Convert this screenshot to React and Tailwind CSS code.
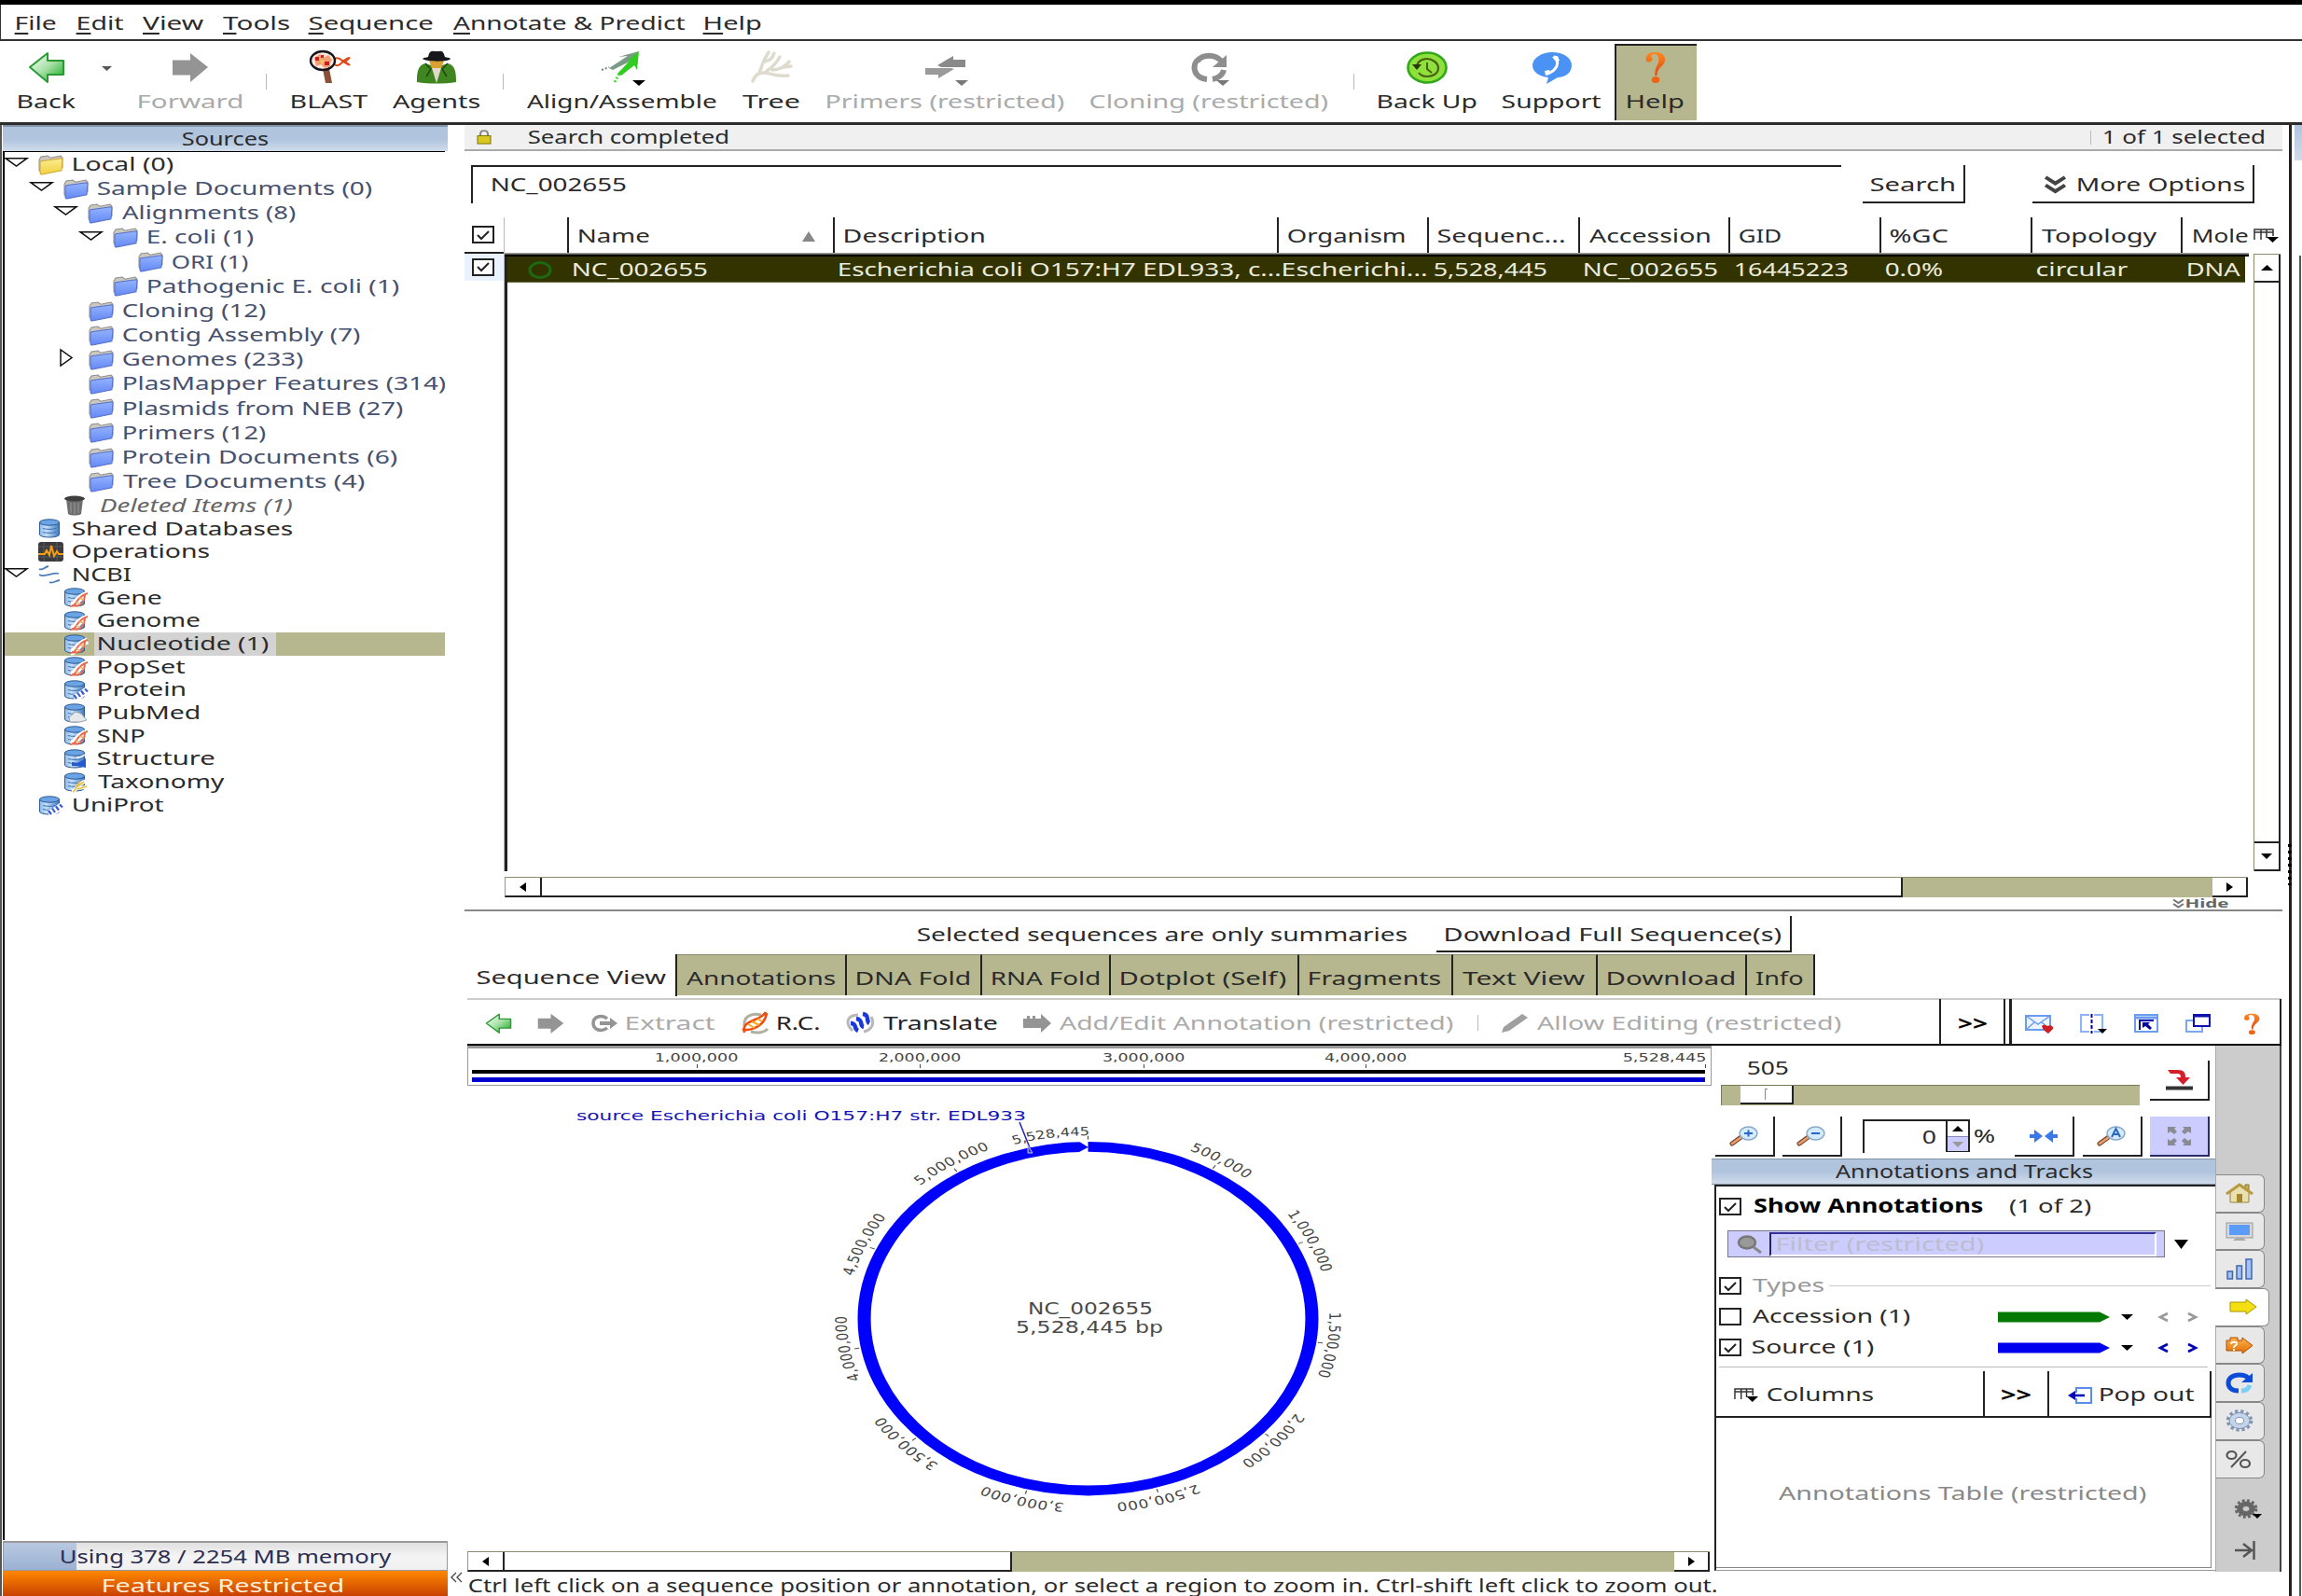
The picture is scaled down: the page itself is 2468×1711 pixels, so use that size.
import React, { useLayoutEffect, useRef } from "react";

/* Text fitted to the width of its box: the glyphs are stretched horizontally. */
function Txt({ c = "", children, u }) {
  const outer = useRef(null);
  const inner = useRef(null);
  useLayoutEffect(() => {
    const fit = () => {
      const cs = getComputedStyle(inner.current);
      const ctx = document.createElement("canvas").getContext("2d");
      ctx.font = `${cs.fontStyle} ${cs.fontWeight} ${cs.fontSize} ${cs.fontFamily}`;
      const m = ctx.measureText(children);
      const k = outer.current.clientWidth / (m.actualBoundingBoxRight + m.actualBoundingBoxLeft);
      inner.current.style.transform = `translate(${m.actualBoundingBoxLeft * k}px, -1px) scaleX(${k})`;
    };
    fit();
    document.fonts.ready.then(fit);
  }, [children]);
  return (
    <span ref={outer} className={"block shrink-0 whitespace-pre leading-none " + c}>
      <span ref={inner} className="inline-block origin-left align-top">
        {u ? <><span className="underline decoration-[1.500px] underline-offset-[3px]">{children[0]}</span>{children.slice(1)}</> : children}
      </span>
    </span>
  );
}

function Ic({ c = "", vb = "0 0 24 24", children }) {
  return (
    <svg className={"block shrink-0 overflow-visible " + c} viewBox={vb} preserveAspectRatio="none" fill="none">
      {children}
    </svg>
  );
}

const Defs = () => (
  <svg className="absolute h-0 w-0">
    <defs>
      <linearGradient id="gGreen" x1="0" y1="0" x2="1" y2="1"><stop offset="0" stopColor="#fff" /><stop offset="0.5" stopColor="#a8e0a8" /><stop offset="1" stopColor="#10a818" /></linearGradient>
      <linearGradient id="gBlue" x1="0" y1="0" x2="1" y2="0"><stop offset="0" stopColor="#8cb8ec" /><stop offset="0.35" stopColor="#c8e0fa" /><stop offset="1" stopColor="#3a78c0" /></linearGradient>
      <linearGradient id="gFold" x1="0" y1="0" x2="0" y2="1"><stop offset="0" stopColor="#94b4ff" /><stop offset="1" stopColor="#6488f4" /></linearGradient>
      <linearGradient id="gYel" x1="0" y1="0" x2="0" y2="1"><stop offset="0" stopColor="#fcec90" /><stop offset="1" stopColor="#f2d040" /></linearGradient>
      <linearGradient id="gOr" x1="0" y1="0" x2="0" y2="1"><stop offset="0" stopColor="#ffb050" /><stop offset="1" stopColor="#e07000" /></linearGradient>
      <linearGradient id="gQ" x1="0" y1="0" x2="0" y2="1"><stop offset="0" stopColor="#ff8820" /><stop offset="1" stopColor="#e04810" /></linearGradient>
    </defs>
  </svg>
);

const LeftArrow = ({ c }) => <Ic c={c} vb="0 0 40 34"><path d="M2 17 21 2v8h17v15H21v8z" fill="url(#gGreen)" stroke="#2a9a34" strokeWidth="2" strokeLinejoin="round" /></Ic>;
const RightArrow = ({ c }) => <Ic c={c} vb="0 0 40 34"><path d="M39 17 20 1v8H1v17h19v8z" fill="#949494" /></Ic>;
const Caret = ({ c = "" }) => <Ic c={c} vb="0 0 12 6"><path d="M0 0h12L6 6z" fill="currentColor" /></Ic>;

const Blast = () => (
  <Ic c="h-[36px] w-[46px]" vb="0 0 46 36">
    <path d="M28 9c5-4 12 8 16 6M28 15c5 5 9-7 16-7M44 8l-5 4 5 4" stroke="#e04818" strokeWidth="2" />
    <path d="M15 20h7l3 15h-7z" fill="#8a5038" />
    <ellipse cx="15" cy="11" rx="13" ry="10" fill="#fbe6dc" stroke="#15151f" strokeWidth="2.4" />
    <path d="M6 8l6-4 4 4 5-3 4 5-3 5 2 2-7 2-4-4-5 2z" fill="#f0a070" />
    <path d="M7 7h4v4H7zM17 12h5v4h-5zM13 5h3v3h-3z" fill="#c82020" />
    <path d="M12 9l5 2-3 5z" fill="#f8c060" />
  </Ic>
);
const Agent = () => (
  <Ic c="h-[36px] w-[46px]" vb="0 0 46 36">
    <path d="M2 34c0-8 0-18 9-20l12 4 12-4c9 2 9 12 9 20-12 2-30 2-42 0z" fill="#3f8620" />
    <path d="M11 14l6 6-5 8M35 14l-6 6 5 8" stroke="#1c4a0c" strokeWidth="1.5" />
    <path d="M15 11h16l-3 8h-10z" fill="#d8a030" />
    <path d="M18 19l5 16 5-16z" fill="#e4d8c8" />
    <path d="M8 9c2-2 5-1 6-2 1-5 3-7 6-6h6c4-1 5 3 6 6 2 1 4 0 6 2 0 3-24 4-30 0z" fill="#16181c" />
  </Ic>
);
const Align = () => (
  <Ic c="h-[36px] w-[48px]" vb="0 0 48 36">
    <path d="M2 21l8-3" stroke="#6a8a78" strokeWidth="2" strokeDasharray="2 2" />
    <path d="M10 19 30 6l-10 1L42 1 34 17l0-6L14 21z" fill="#7a9a88" />
    <path d="M16 34l6-11" stroke="#50d840" strokeWidth="3" strokeDasharray="2 2" />
    <path d="M19 25 34 9l-6 3L42 1l-2 20-3-5-14 11z" fill="#30cc20" />
  </Ic>
);
const Tree = () => (
  <Ic c="h-[36px] w-[46px]" vb="0 0 46 36">
    <path d="M3 33c3-7 5-8 11-9s12 5 27 3M10 25c2-7 4-14 10-23M16 12c6-1 8-4 10-9M18 22c5-3 10-8 14-15M24 21c6 0 14-3 18-9M36 18l8-1" stroke="#dedbcc" strokeWidth="3.500" strokeLinecap="round" />
  </Ic>
);
const Primers = () => (
  <Ic c="h-[26px] w-[46px]" vb="0 0 46 26"><path d="M14 11 31 1v4h13v8H18z" fill="#8a8a8a" /><path d="M32 15 15 25v-4H1v-7h28z" fill="#9a9a9a" /></Ic>
);
const Cloning = () => (
  <Ic c="h-[29px] w-[40px]" vb="0 0 40 29">
    <path d="M17 27C7 26 2 19 4 11M7 7c6-7 18-7 25 0M35 17c-1 5-6 9-12 10" stroke="#8e8e8e" strokeWidth="6" /><path d="M38 1v13H23z" fill="#8e8e8e" /><path d="M4 12c0-3 1-4 4-6" stroke="#8e8e8e" strokeWidth="6" />
  </Ic>
);
const Backup = () => (
  <Ic c="h-[35px] w-[44px]" vb="0 0 44 35">
    <ellipse cx="22" cy="17.500" rx="20.500" ry="16" fill="#8ee03c" stroke="#30a818" strokeWidth="2.600" />
    <path d="M11 17c0-6 6-9 11-9s12 4 12 10-6 9-12 9c-4 0-7-1-9-4" stroke="#4a6010" strokeWidth="2.200" /><path d="M6 14h10l-5 6z" fill="#2a3808" /><path d="M22 12v7l5 4" stroke="#4a6010" strokeWidth="2" />
  </Ic>
);
const Support = () => (
  <Ic c="h-[35px] w-[44px]" vb="0 0 44 35">
    <path d="M22 1c12 0 21 6 21 14s-7 13-15 13l-12 7 2-7C8 27 1 22 1 15S10 1 22 1z" fill="#4a92f4" />
    <path d="M25 6c5 6 3 14-8 18" stroke="#fff" strokeWidth="3" strokeLinecap="round" /><path d="M22 6l6-1 2 5-4 1zM14 21l5-1 1 4-5 2z" fill="#fff" />
  </Ic>
);
const Question = ({ c }) => (
  <Ic c={c} vb="0 0 26 34"><path d="M3 10C1 3 8 1 13 1c7 0 11 3 11 8 0 7-9 8-9 17h-2c-1-10 4-11 4-17 0-4-2-6-5-6-4 0-4 3-2 5 1 3-6 5-7 2z" fill="url(#gQ)" /><ellipse cx="13.500" cy="30.500" rx="4.500" ry="3.500" fill="#ee6414" /></Ic>
);

const Folder = ({ y }) => (
  <Ic c="h-[21px] w-[27px]" vb="0 0 27 20">
    <path d="M1 5 3 2l7-1 3 2 11-2 2 2v10L4 18 1 16z" fill="#ccc8c0" stroke="#8e8e8c" strokeWidth="1" />
    <path d="M3 6.500 25 3.500c1 0 1 1 1 1l-1 11.500L4 20c-1 0-2-1-2-2L2 7.500z" fill={y ? "url(#gYel)" : "url(#gFold)"} stroke={y ? "#d0a830" : "#5470c8"} strokeWidth="1" />
  </Ic>
);
const Cyl = () => (
  <>
    <path d="M1.500 4v13c0 4 21 4 21 0V4z" fill="url(#gBlue)" stroke="#2e5c94" />
    <ellipse cx="12" cy="4" rx="10.500" ry="3.200" fill="#6aa4e4" stroke="#2e5c94" />
    <path d="M5 10.500c4 1.200 10 1.200 14 0M5 14.500c4 1.200 10 1.200 14 0" stroke="#3a70b0" />
  </>
);
function DbIcon({ k }) {
  return (
    <Ic c="h-[21px] w-[27px]" vb="0 0 27 21">
      <Cyl />
      {k === "dna" && <><path d="M8 19c7 0 4-8 18-12" stroke="#fff" strokeWidth="7" /><path d="M7 20c9 0 5-10 19-14M9 19c8 2 13-1 14-11" stroke="#e8684c" strokeWidth="2" /><path d="M13 15l5 3M17 11l5 2" stroke="#f4b060" strokeWidth="1.400" /></>}
      {k === "prot" && <><path d="M11 19c6-1 9-4 15-9" stroke="#fff" strokeWidth="7" /><path d="M11 16l3 4M15 13.500l3 4.500M19 11.500l3 4M23 9.500l3 3" stroke="#3a5ad8" strokeWidth="2.200" /></>}
      {k === "pub" && <path d="M6 15l7-6 6 2 6 7-7 2-11 0z" fill="#e6e9ec" stroke="#9aa4ac" />}
      {k === "struct" && <><path d="M9 14l6 1 9-5v10l-9-2-6 0z" fill="#2858d0" /><path d="M14 9c3 1 6-1 9-3" stroke="#e8f0ff" strokeWidth="2" /></>}
      {k === "tax" && <><path d="M9 21c4 0 4-8 16-12M13 17c4 0 8 0 13-2" stroke="#fff" strokeWidth="4" /><path d="M10 21c4-2 3-7 8-11M14 16l8-6M15 18l10-3" stroke="#e8c040" strokeWidth="1.800" /></>}
    </Ic>
  );
}
const Trash = () => <Ic c="h-[22px] w-[22px]" vb="0 0 22 22"><path d="M2 4h18l-2 16c-3 2-11 2-14 0z" fill="#6e6e6e" /><path d="M7 8v11M11 8v12M15 8v11" stroke="#9a9a9a" /><ellipse cx="11" cy="3.500" rx="11" ry="3" fill="#3e3e3e" /></Ic>;
const Ops = () => <Ic c="h-[21px] w-[27px]" vb="0 0 27 21"><rect width="27" height="21" rx="3" fill="#3c3c3e" /><path d="M0 5h27M0 16h27M6 0v21M20 0v21" stroke="#5a5a5c" /><path d="M0 13h7l2-4 3 5 2-10 3 11 3-5 2 3h5" stroke="#f8a010" strokeWidth="2" /></Ic>;
const Ncbi = () => <Ic c="h-[20px] w-[24px]" vb="0 0 24 20"><path d="M1 4c4 2 5-2 10-3M1 10c6 4 14-3 21-1M12 18c3 2 6-1 11-2" stroke="#5080b8" strokeWidth="1.800" /></Ic>;

const rowsA = [
  ["pl-[5px]", "w-[108px]", "Local (0)", "open", "yellow"],
  ["pl-[32px]", "w-[294px]", "Sample Documents (0)", "open"],
  ["pl-[58px]", "w-[186px]", "Alignments (8)", "open"],
  ["pl-[85px]", "w-[114px]", "E. coli (1)", "open"],
  ["pl-[112px]", "w-[81px]", "ORI (1)"],
  ["pl-[85px]", "w-[270px]", "Pathogenic E. coli (1)"],
  ["pl-[59px]", "w-[153px]", "Cloning (12)"],
  ["pl-[59px]", "w-[254px]", "Contig Assembly (7)"],
  ["pl-[59px]", "w-[193px]", "Genomes (233)", "shut"],
  ["pl-[59px]", "w-[346px]", "PlasMapper Features (314)"],
  ["pl-[59px]", "w-[300px]", "Plasmids from NEB (27)"],
  ["pl-[59px]", "w-[153px]", "Primers (12)"],
  ["pl-[59px]", "w-[294px]", "Protein Documents (6)"],
  ["pl-[59px]", "w-[259px]", "Tree Documents (4)"],
];
const rowsB = [
  ["pl-[5px]", "w-[235px]", "Shared Databases", "db"],
  ["pl-[5px]", "w-[146px]", "Operations", "ops"],
  ["pl-[5px]", "w-[63px]", "NCBI", "ncbi", "open"],
  ["pl-[32px]", "w-[68px]", "Gene", "dna"],
  ["pl-[32px]", "w-[109px]", "Genome", "dna"],
  ["pl-[32px]", "w-[183px]", "Nucleotide (1)", "dna"],
  ["pl-[32px]", "w-[93px]", "PopSet", "dna"],
  ["pl-[32px]", "w-[94px]", "Protein", "prot"],
  ["pl-[32px]", "w-[108px]", "PubMed", "pub"],
  ["pl-[32px]", "w-[50px]", "SNP", "dna"],
  ["pl-[32px]", "w-[125px]", "Structure", "struct"],
  ["pl-[32px]", "w-[136px]", "Taxonomy", "tax"],
  ["pl-[5px]", "w-[97px]", "UniProt", "prot"],
];
const Twisty = ({ s }) => (
  <span className="flex h-full w-[36px] shrink-0 items-center">
    {s === "open" && <Ic c="-mt-[4px] h-[10px] w-[25px]" vb="0 0 25 10"><path d="M1 .7h23L12.500 9z" stroke="#111" strokeWidth="1.500" /></Ic>}
    {s === "shut" && <Ic c="-mt-[4px] ml-[5px] h-[19px] w-[14px]" vb="0 0 14 19"><path d="M1 1v17l12-8.500z" stroke="#111" strokeWidth="1.500" /></Ic>}
  </span>
);

function Sidebar() {
  return (
    <div className="flex h-full w-[498px] shrink-0">
      <div className="flex w-[480px] flex-col border-l-2 border-[#555] pl-px">
        <div className="flex h-[28px] items-center justify-center border-t-2 border-[#8494a8] bg-linear-to-b from-[#b0c4de] via-[#b0c4de] to-[#d0dcea]">
          <Txt c="w-[91px]">Sources</Txt>
        </div>
        <div className="flex h-[1489px] w-[474px] flex-col overflow-hidden border-t border-l-2 border-black">
          {rowsA.map(([p, w, t, s, y]) => (
            <div key={t} className={"flex h-[26.180px] shrink-0 items-center -ml-[5px] " + p}>
              <Twisty s={s} />
              <Folder y={y} />
              <Txt c={"ml-[10px] " + w + (y ? "" : " text-[#46506e]")}>{t}</Txt>
            </div>
          ))}
          <div className="flex h-[25px] shrink-0 items-center pl-[64px]">
            <Trash />
            <Txt c="ml-[16px] w-[207px] italic text-[#666]">Deleted Items (1)</Txt>
          </div>
          {rowsB.map(([p, w, t, k, s]) => (
            <div key={t} className={"flex h-[24.700px] shrink-0 items-center " + (t === "Nucleotide (1)" ? "bg-[#b7b78f]" : "")}>
              <div className={"-ml-[5px] flex h-full items-center " + p}>
                <Twisty s={s} />
                <span className="flex w-[27px]">{k === "ops" ? <Ops /> : k === "ncbi" ? <Ncbi /> : <DbIcon k={k} />}</span>
                <span className={"ml-[6px] flex h-full items-center pl-[4px] pr-[8px] " + (t === "Nucleotide (1)" ? "bg-[#d3d3d3]" : "")}><Txt c={w}>{t}</Txt></span>
              </div>
            </div>
          ))}
        </div>
        <div className="mt-px flex h-[32px] border border-t-2 border-[#999]">
          <div className="relative flex grow items-center bg-linear-to-b from-[#e0e0e0] via-[#f4f4f4] to-[#f0f0f0]">
            <div className="h-full w-[78px] bg-linear-to-b from-[#b8c8e0] to-[#9cb2d4]" />
            <div className="absolute left-[61px] top-[5px]"><Txt c="w-[355px] text-[#2c2c50]">Using 378 / 2254 MB memory</Txt></div>
          </div>
        </div>
        <div className="flex h-[27px] grow items-center bg-linear-to-b from-[#ff8800] to-[#c84000] pl-[107px] pt-[6px]">
          <Txt c="w-[257px] text-[#fff0dc]">Features Restricted</Txt>
        </div>
      </div>
      <div className="flex w-[18px] items-end pb-[15px] pl-[3px]"><Ic c="h-[10px] w-[13px]" vb="0 0 13 9"><path d="M6 0 1 4.500 6 9M12 0 7 4.500 12 9" stroke="#444" strokeWidth="1.300" /></Ic></div>
    </div>
  );
}

const Tool = ({ m, w, label, children, gray, drop }) => (
  <div className={"flex flex-col items-center pt-[8px] " + m + (gray ? " text-[#aaa]" : "")}>
    <div className="relative flex h-[40px] items-center justify-center">
      {children}
      {drop && <Caret c={"absolute -right-[1px] bottom-0 h-[6px] w-[14px] " + drop} />}
    </div>
    <div className="flex h-[35px] items-center"><Txt c={w}>{label}</Txt></div>
  </div>
);
const Sep = ({ m }) => <div className={"h-[17px] w-px shrink-0 bg-[#bbb] " + m} />;

function Toolbar() {
  return (
    <div className="flex h-[90px] border-b-3 border-[#2c2c2c] pl-[19px]">
      <Tool m="" w="w-[62px]" label="Back"><LeftArrow c="h-[34px] w-[40px]" /></Tool>
      <Caret c="ml-[28px] mt-[27px] h-[5px] w-[11px] text-[#555]" />
      <Tool m="ml-[28px]" w="w-[111px]" label="Forward" gray><RightArrow c="h-[32px] w-[40px]" /></Tool>
      <Sep m="ml-[26px] mt-[35px]" />
      <Tool m="ml-[26px]" w="w-[83px]" label="BLAST"><Blast /></Tool>
      <Tool m="ml-[26px]" w="w-[93px]" label="Agents"><Agent /></Tool>
      <Sep m="ml-[25px] mt-[35px]" />
      <Tool m="ml-[25px]" w="w-[203px]" label="Align/Assemble" drop="text-black"><Align /></Tool>
      <Tool m="ml-[28px]" w="w-[61px]" label="Tree"><Tree /></Tool>
      <Tool m="ml-[29px]" w="w-[255px]" label="Primers (restricted)" gray drop="text-[#777]"><Primers /></Tool>
      <Tool m="ml-[28px]" w="w-[255px]" label="Cloning (restricted)" gray drop="text-[#777]"><Cloning /></Tool>
      <Sep m="ml-[27px] mt-[35px]" />
      <Tool m="ml-[25px]" w="w-[106px]" label="Back Up"><Backup /></Tool>
      <Tool m="ml-[28px]" w="w-[105px]" label="Support"><Support /></Tool>
      <div className="ml-[15px] mt-[3px] flex h-[82px] w-[88px] justify-center border-l-2 border-t-2 border-[#222] bg-[#b7b78f] pr-[4px]">
        <div className="-mt-[5px]"><Tool m="" w="w-[61px]" label="Help"><Question c="h-[34px] w-[25px]" /></Tool></div>
      </div>
    </div>
  );
}

const Check = ({ on = true, c = "" }) => (
  <span className={"flex h-[19px] w-[24px] shrink-0 items-center justify-center border-2 border-[#222] bg-white " + c}>
    {on && <Ic c="h-[10px] w-[14px]" vb="0 0 14 10"><path d="M1 5l4 4 8-8" stroke="#222" strokeWidth="2" /></Ic>}
  </span>
);

const cols = [
  ["w-[285px]", "w-[76px]", "Name", "w-[144px]", "NC_002655", "pl-[4px]"],
  ["w-[476px]", "w-[151px]", "Description", "w-[474px]", "Escherichia coli O157:H7 EDL933, c...", "pl-[4px]"],
  ["w-[161px]", "w-[125px]", "Organism", "w-[155px]", "Escherichi...", "pl-[4px]"],
  ["w-[162px]", "w-[136px]", "Sequenc...", "w-[120px]", "5,528,445", "pl-[6px]"],
  ["w-[161px]", "w-[130px]", "Accession", "w-[143px]", "NC_002655", "pl-[4px]"],
  ["w-[162px]", "w-[44px]", "GID", "w-[121px]", "16445223", "pl-[5px]"],
  ["w-[162px]", "w-[62px]", "%GC", "w-[61px]", "0.0%", "pl-[5px]"],
  ["w-[161px]", "w-[124px]", "Topology", "w-[98px]", "circular", "pl-[5px]"],
];

function HBar({ c, thumb, rest }) {
  return (
    <div className={"flex h-[22px] border-t border-[#8c8c6c] bg-[#b7b78f] " + c}>
      <div className="flex w-[40px] items-center justify-center border-b-2 border-l border-r-2 border-[#222] border-l-[#999970] bg-white"><Ic c="h-[10px] w-[7px]" vb="0 0 7 10"><path d="M7 0v10L0 5z" fill="#000" /></Ic></div>
      <div className={"border-b-2 border-r-2 border-[#222] bg-white " + thumb} />
      <div className={rest} />
      <div className="flex grow items-center justify-center border-b-2 border-r-2 border-[#222] bg-white"><Ic c="h-[10px] w-[7px]" vb="0 0 7 10"><path d="M0 0v10l7-5z" fill="#000" /></Ic></div>
    </div>
  );
}
const Chev2 = ({ c, k = "#444" }) => <Ic c={c} vb="0 0 24 20"><path d="M2 1l10 7 10-7M2 10l10 7 10-7" stroke={k} strokeWidth="4" /></Ic>;
const ColIcon = ({ c }) => <Ic c={c} vb="0 0 28 15"><path d="M1 12V1h20v7M1 4h20M8 1v11M14 1v9" stroke="#333" strokeWidth="1.500" /><path d="M14 9h13l-6.500 6z" fill="#000" /></Ic>;

function Documents() {
  return (
    <>
      <div className="flex h-[28px] shrink-0 items-center border-b-2 border-[#aaa] bg-[#f0f0f0] pl-[13px]">
        <Ic c="h-[16px] w-[16px]" vb="0 0 16 17"><path d="M4 8V5c0-5 8-5 8 0v3" stroke="#888" strokeWidth="2" /><rect x="1" y="7" width="14" height="9" fill="#d8c820" stroke="#7c7000" /></Ic>
        <Txt c="ml-[40px] w-[213px]">Search completed</Txt>
        <div className="ml-[1461px] h-[15px] w-px bg-[#bbb]" />
        <Txt c="ml-[13px] w-[172px]">1 of 1 selected</Txt>
      </div>
      <div className="flex h-[71px] shrink-0 pl-[7px] pt-[15px]">
        <div className="flex h-[41px] w-[1469px] items-center border-l-2 border-t-2 border-[#222] pl-[20px]"><Txt c="w-[144px]">NC_002655</Txt></div>
        <div className="ml-[23px] flex h-[41px] w-[110px] items-center border-b-2 border-r-2 border-[#222] pl-[9px] pt-[4px]"><Txt c="w-[90px]">Search</Txt></div>
        <div className="ml-[72px] flex h-[41px] w-[238px] items-center border-b-2 border-r-2 border-[#222] pl-[12px] pt-[4px]"><Chev2 c="h-[19px] w-[25px]" /><Txt c="ml-[11px] w-[179px]">More Options</Txt></div>
      </div>
      <div className="flex h-[701px] shrink-0">
        <div className="w-[42px] shrink-0">
          <div className="flex h-[39px] items-center border-b-2 border-[#222] pl-[8px]"><Check /></div>
          <div className="flex h-[29px] items-center bg-[#eaf1ff] pl-[8px] pb-px"><Check /></div>
        </div>
        <div className="flex w-[1871px] shrink-0 flex-col border-l border-[#bbb]">
          <div className="flex h-[38px] shrink-0">
            <div className="w-[69px] shrink-0 border-r-2 border-[#222]" />
            {cols.map(([w, tw, t]) => (
              <div key={t} className={"flex shrink-0 items-center border-r-2 border-[#222] pl-[10px] pt-[2px] " + w}>
                <Txt c={tw}>{t}</Txt>
                {t === "Name" && <Ic c="ml-[164px] h-[11px] w-[14px]" vb="0 0 14 11"><path d="M7 0l7 11H0z" fill="#888" /></Ic>}
              </div>
            ))}
            <div className="flex w-[71px] items-center pl-[11px] pt-[2px]"><Txt c="w-[59px]">Mole</Txt></div>
          </div>
          <div className="h-[4px] shrink-0 border-b-2 border-t border-b-black border-t-[#999] bg-[#66665a]" />
          <div className="flex grow flex-col border-l-3 border-[#222]">
            <div className="flex h-[28px] w-[1863px] items-center overflow-hidden border-b border-[#6a6a40] bg-[#333300] pt-px text-[#ececdc]">
              <div className="flex w-[66px] shrink-0 pl-[22px]"><Ic c="h-[19px] w-[26px]" vb="0 0 26 19"><ellipse cx="13" cy="9.500" rx="11" ry="8" stroke="#1c6a10" strokeWidth="3" /></Ic></div>
              {cols.map(([w, , , tw, t, p], i) => (
                <div key={i} className={"flex shrink-0 items-center " + p + " " + w}><Txt c={tw}>{t}</Txt></div>
              ))}
              <div className="pl-[5px]"><Txt c="w-[58px]">DNA</Txt></div>
            </div>
          </div>
        </div>
        <div className="ml-[5px] flex w-[31px] flex-col">
          <div className="flex h-[39px] items-center"><ColIcon c="h-[15px] w-[28px]" /></div>
          <div className="flex w-[29px] grow flex-col border-l border-t border-[#8c8c6c]">
            <div className="flex h-[30px] items-center justify-center border-b-2 border-r-2 border-[#222]"><Ic c="h-[6px] w-[13px]" vb="0 0 12 6"><path d="M0 6h12L6 0z" fill="#000" /></Ic></div>
            <div className="grow border-b-2 border-r-2 border-[#222]" />
            <div className="flex h-[30px] items-center justify-center border-b-2 border-r-2 border-[#222]"><Caret c="h-[6px] w-[12px] text-black" /></div>
          </div>
        </div>
      </div>
      <div className="flex h-[28px] shrink-0 flex-col pl-[43px] pt-[6px]"><HBar c="w-[1869px]" thumb="w-[1459px]" rest="w-[332px]" /></div>
      <div className="flex h-[15px] shrink-0 items-center border-b-2 border-[#888] pl-[1831px]">
        <Chev2 c="h-[10px] w-[13px]" k="#777" /><Txt c="ml-[2px] mt-[2px] w-[46px] text-[13px] font-bold text-[#666]">Hide</Txt>
      </div>
    </>
  );
}

const tabs = [
  ["w-[182px]", "w-[159px]", "Annotations"], ["w-[145px]", "w-[121px]", "DNA Fold"], ["w-[138px]", "w-[115px]", "RNA Fold"],
  ["w-[202px]", "w-[178px]", "Dotplot (Self)"], ["w-[165px]", "w-[141px]", "Fragments"], ["w-[155px]", "w-[131px]", "Text View"],
  ["w-[160px]", "w-[136px]", "Download"], ["w-[73px]", "w-[51px]", "Info"],
];

function SeqTools() {
  return (
    <div className="flex h-[51px] w-[1945px] shrink-0 items-center border-b-2 border-t-2 border-b-black border-t-[#ccc] pl-[19px] pt-[2px] text-[#aaa]">
      <LeftArrow c="h-[22px] w-[29px]" />
      <RightArrow c="ml-[27px] h-[22px] w-[29px]" />
      <Ic c="ml-[28px] h-[20px] w-[30px]" vb="0 0 30 20"><path d="M18 5C12 0 3 3 3 10s9 10 15 5" stroke="#949494" strokeWidth="3.500" /><path d="M10 8h11V4l8 6-8 6v-4H10z" fill="#949494" /></Ic>
      <Txt c="ml-[8px] mt-[2px] w-[95px]">Extract</Txt>
      <Ic c="ml-[28px] h-[23px] w-[31px]" vb="0 0 31 23"><path d="M22 3C10 0 3 6 4 15M11 21c8 2 14 1 18-3" stroke="#b0b0a0" strokeWidth="3" /><path d="M2 19C14 20 26 14 28 1M4 22C0 8 22 10 27 0" stroke="#f04c10" strokeWidth="2.600" /><path d="M8 13l7 4M12 10l8 4M18 7l5 3" stroke="#f8a820" strokeWidth="2" /></Ic>
      <Txt c="ml-[8px] mt-[2px] w-[46px] text-[#222]">R.C.</Txt>
      <Ic c="ml-[28px] h-[23px] w-[31px]" vb="0 0 31 23"><path d="M13 3C5 3 2 7 2 11s3 7 5 9M19 21c9-2 12-9 8-16" stroke="#b8b8b8" strokeWidth="3" /><path d="M5 12c7 0 3 6 8 8M11 7c8 1 3 8 8 9M18 2c8 1 3 8 7 10" stroke="#1a38e0" strokeWidth="4.500" /></Ic>
      <Txt c="ml-[9px] mt-[2px] w-[122px] text-[#222]">Translate</Txt>
      <Ic c="ml-[28px] h-[20px] w-[30px]" vb="0 0 30 20"><path d="M0 5h4V2h3v3h3V2h3v3h6V0l11 10-11 10v-5H0z" fill="#949494" /></Ic>
      <Txt c="ml-[9px] mt-[2px] w-[422px]">Add/Edit Annotation (restricted)</Txt>
      <Sep m="ml-[26px]" />
      <Ic c="ml-[25px] h-[22px] w-[29px]" vb="0 0 29 22"><path d="M0 21l2-6L22 1l6 4L8 19z" fill="#a0a0a0" /></Ic>
      <Txt c="ml-[9px] mt-[2px] w-[326px]">Allow Editing (restricted)</Txt>
      <div className="-mt-[2px] ml-[105px] flex h-[49px] w-[71px] items-center border-l-2 border-r-2 border-[#222] pl-[18px] pt-[5px]"><Txt c="w-[31px] font-bold text-black">{">>"}</Txt></div>
      <div className="-mt-[2px] ml-[4px] flex h-[49px] grow items-center border-l-3 border-r-2 border-[#222] pl-[14px] pt-[3px]">
        <Ic c="h-[21px] w-[31px]" vb="0 0 31 21"><rect x="1" y="2" width="26" height="15" fill="#eef4ff" stroke="#6a9cf0" strokeWidth="2" /><path d="M1 2l13 9L27 2M1 17l9-8M27 17l-9-8" stroke="#6a9cf0" strokeWidth="1.500" /><path d="M18 13c2-2 4-1 6 0 3-2 7 0 6 3l-5 5c-3-2-6-4-7-8z" fill="#cc2020" /></Ic>
        <Ic c="ml-[28px] h-[21px] w-[29px]" vb="0 0 29 21"><path d="M10 1H1v18h9M15 1h9v18h-9" stroke="#8ab4f8" strokeWidth="2" /><path d="M12.500 0v21" stroke="#0000a8" strokeWidth="2" strokeDasharray="4 2" /><path d="M19 16h10l-5 5z" fill="#000" /></Ic>
        <Ic c="ml-[29px] h-[20px] w-[26px]" vb="0 0 26 20"><rect x="1" y="1" width="24" height="18" stroke="#6a9cf0" strokeWidth="2" /><path d="M1 4h24" stroke="#6a9cf0" strokeWidth="3" /><path d="M6 17V7h15" stroke="#0000b0" strokeWidth="2" /><path d="M9 9h8l-2 2 4 4-2 2-5-4-3 2z" fill="#0000a0" /></Ic>
        <Ic c="ml-[29px] h-[21px] w-[28px]" vb="0 0 28 21"><rect x="1" y="7" width="17" height="12" stroke="#7aa8f4" strokeWidth="2" /><rect x="9" y="1" width="17" height="12" fill="#fff" stroke="#1010b0" strokeWidth="2" /><path d="M8 2h19" stroke="#1010b0" strokeWidth="3" /></Ic>
        <div className="ml-[33px]"><Question c="h-[23px] w-[20px]" /></div>
      </div>
    </div>
  );
}

const marks = ["500,000", "1,000,000", "1,500,000", "2,000,000", "2,500,000", "3,000,000", "3,500,000", "4,000,000", "4,500,000", "5,000,000"];
const R = 198.8;
function Plasmid() {
  const frac = (i) => ((i + 1) * 500000) / 5528445;
  return (
    <svg className="block h-[499px] w-[1332px]" viewBox="502 1164 1332 499" fontFamily="'DejaVu Sans', sans-serif">
      <defs>
        <path id="orbit" d={`M0 ${R}A${R} ${R} 0 0 1 0 ${-R}A${R} ${R} 0 0 1 0 ${R}`} />
        <path id="orbitEnd" d="M0 196.500A196.500 196.500 0 0 1 0 -196.500A196.500 196.500 0 0 1 0 196.500" />
      </defs>
      <text x="619" y="1200.500" fontSize="14" fill="#1414b4" textLength="482" lengthAdjust="spacingAndGlyphs">source Escherichia coli O157:H7 str. EDL933</text>
      <g transform="translate(1167.500 1413.700) scale(1.302 1)">
        <circle r="184.300" stroke="#0000ff" strokeWidth="10.800" fill="none" />
        <path d="M-8-190.500H0V-184zM-8-178.200H0V-183.600z" fill="#fff" />
        {marks.map((m, i) => {
          const a = frac(i);
          const f = (a + 0.5) % 1;
          const s = Math.sin(a * 2 * Math.PI), c = -Math.cos(a * 2 * Math.PI);
          return (
            <g key={m}>
              <path d={`M${191 * s} ${191 * c}L${195 * s} ${195 * c}`} stroke="#555" />
              <text fontSize="13" fill="#444" textAnchor="middle" letterSpacing="0.4"><textPath href="#orbit" startOffset={f * 2 * Math.PI * R + 1}>{m}</textPath></text>
            </g>
          );
        })}
        <text fontSize="12.500" fill="#444" textAnchor="end"><textPath href="#orbitEnd" startOffset={Math.PI * 196.5 + 1}>5,528,445</textPath></text>
        <path d="M0-192v-4" stroke="#555" />
      </g>
      <path d="M1094 1203l12 30" stroke="#2020c0" strokeWidth="1.500" />
      <path d="M1103 1228l5 8h-5z" stroke="#c8c8f0" strokeWidth="1" fill="#3030d0" />
      <text x="1103" y="1408.500" fontSize="17" fill="#4a4a4a" textLength="134" lengthAdjust="spacingAndGlyphs">NC_002655</text>
      <text x="1090" y="1429" fontSize="17" fill="#4a4a4a" textLength="158" lengthAdjust="spacingAndGlyphs">5,528,445 bp</text>
    </svg>
  );
}

const Mark = ({ m, t, tick = "justify-center" }) => (
  <div className={"w-[88px] shrink-0 " + m}>
    <Txt c="w-[88px] font-['DejaVu_Sans',sans-serif] text-[13px] text-[#444]">{t}</Txt>
    <div className={"flex " + tick}><div className="h-[4px] w-px bg-[#444]" /></div>
  </div>
);

function Viewer() {
  return (
    <div className="flex w-[1334px] shrink-0 flex-col">
      <div className="flex h-[43px] flex-col border-x border-b border-t-3 border-[#999] pl-[4px] pt-[4px]">
        <div className="flex h-[18px]">
          <Mark m="ml-[197px]" t="1,000,000" /><Mark m="ml-[151px]" t="2,000,000" /><Mark m="ml-[152px]" t="3,000,000" /><Mark m="ml-[150px]" t="4,000,000" /><Mark m="ml-[233px]" t="5,528,445" tick="justify-end" />
        </div>
        <div className="mt-px h-[4px] w-[1322px] bg-black" />
        <div className="mt-[4px] h-[5px] w-[1322px] bg-[#0000d0]" />
      </div>
      <Plasmid />
      <HBar c="mt-0 w-[1332px]" thumb="w-[544px]" rest="w-[710px]" />
    </div>
  );
}

const Mag = ({ t }) => (
  <Ic c="h-[21px] w-[30px]" vb="0 0 30 21"><path d="M2 19l11-8" stroke="#7c4a30" strokeWidth="5" strokeLinecap="round" /><path d="M2 19l10-7" stroke="#e8a070" strokeWidth="2.500" strokeLinecap="round" /><ellipse cx="19.500" cy="8" rx="9.500" ry="7" fill="#d4ebff" stroke="#88aac8" strokeWidth="1.500" /><path d={t} stroke="#2a66c8" strokeWidth="2" /></Ic>
);
const Btn = ({ c, children }) => <div className={"flex h-[43px] w-[64px] shrink-0 items-center justify-center border-b-2 border-r-2 " + c}>{children}</div>;
const TrackRow = ({ on, w, t, fill, k }) => (
  <div className="flex h-[33px] items-center pl-[4px]">
    <Check on={on} />
    <div className="ml-[12px] w-[263px]"><Txt c={w}>{t}</Txt></div>
    <Ic c="h-[12px] w-[120px]" vb="0 0 120 12"><path d="M0 .500h109l11 5.500-11 5.500H0z" fill={fill} /></Ic>
    <Caret c="ml-[12px] h-[6px] w-[13px] text-black" />
    <Ic c={"ml-[27px] h-[10px] w-[11px] " + k} vb="0 0 11 10"><path d="M10 1 2 5l8 4" stroke="currentColor" strokeWidth="2.600" /></Ic>
    <Ic c={"ml-[20px] h-[10px] w-[11px] " + k} vb="0 0 11 10"><path d="M1 1l8 4-8 4" stroke="currentColor" strokeWidth="2.600" /></Ic>
  </div>
);

function Inspector() {
  return (
    <div className="flex w-[540px] shrink-0 flex-col">
      <div className="flex h-[121px] shrink-0 flex-col">
        <div className="flex h-[76px] shrink-0">
          <div className="ml-[10px] w-[449px] pt-[14px]">
            <Txt c="ml-[29px] w-[43px]">505</Txt>
            <div className="mt-[7px] flex h-[22px] border-l border-t border-[#77775a] bg-[#b7b78f] pl-[20px]"><div className="flex h-[20px] w-[57px] items-center justify-center border-b-2 border-r-2 border-[#222] bg-white"><div className="h-[12px] w-[3px] border-l border-t border-[#888]" /></div></div>
          </div>
          <div className="ml-[11px] pt-[16px]"><Btn c="border-[#222]"><Ic c="h-[23px] w-[29px]" vb="0 0 29 23"><path d="M2 1h10c8 0 9 3 9 8h5l-7.500 8L11 9h5c0-3-1-4-4-4H5z" fill="#d42028" /><path d="M0 18.500h29v4H0z" fill="#333" /></Ic></Btn></div>
        </div>
        <div className="flex h-[44px] pl-[4px]">
          <Btn c="border-[#222]"><Mag t="M15 8h9M19.500 4.500v7" /></Btn>
          <Btn c="ml-[8px] border-[#222]"><Mag t="M15 8h9" /></Btn>
          <div className="ml-[22px] mt-[3px] flex h-[36px] w-[115px] border-l-2 border-t-2 border-[#222]">
            <div className="flex grow items-center justify-end pr-[11px]"><Txt c="w-[13px]">0</Txt></div>
            <div className="flex h-[33px] w-[26px] flex-col border-b border-l-2 border-r-2 border-[#222]">
              <div className="flex h-[16px] items-center justify-center"><Ic c="h-[6px] w-[12px]" vb="0 0 12 6"><path d="M0 6h12L6 0z" fill="#000" /></Ic></div>
              <div className="flex grow items-center justify-center border-t border-[#8888c0] bg-[#ccccff]"><Caret c="h-[6px] w-[12px] text-[#999]" /></div>
            </div>
          </div>
          <div className="flex items-center pb-px"><Txt c="ml-[5px] w-[22px]">%</Txt></div>
          <Btn c="ml-[21px] border-[#222]"><Ic c="h-[16px] w-[30px]" vb="0 0 30 16"><path d="M0 6h5V1l9 7-9 7v-5H0zM30 6h-5V1l-9 7 9 7v-5h5z" fill="#3a78e8" /></Ic></Btn>
          <Btn c="ml-[9px] border-[#222]"><Mag t="M15 12l4.500-9 4.500 9M17 9h5" /></Btn>
          <Btn c="ml-[8px] border-[#2a2a66] bg-[#ccccff]"><Ic c="h-[22px] w-[27px]" vb="0 0 27 22"><path d="M1 1h9l-2 2 3 3-3 3-4-3-3 2zM26 1h-9l2 2-3 3 3 3 4-3 3 2zM1 21h9l-2-2 3-3-3-3-4 3-3-2zM26 21h-9l2-2-3-3 3-3 4 3 3-2z" fill="#8a8a94" /></Ic></Btn>
        </div>
      </div>
      <div className="flex h-[28px] shrink-0 items-center border-t border-b border-[#8494a8] bg-linear-to-b from-[#b0c4de] via-[#b0c4de] to-[#d0dcea] pl-[133px] pt-px"><Txt c="w-[275px]">Annotations and Tracks</Txt></div>
      <div className="ml-[3px] flex h-[414px] flex-col border-b border-l-2 border-t-2 border-[#222] border-b-[#999]">
        <div className="flex h-[42px] items-center pl-[3px] pt-px"><Check /><Txt c="ml-[13px] w-[246px] font-bold text-black">Show Annotations</Txt><Txt c="ml-[28px] w-[88px]">(1 of 2)</Txt></div>
        <div className="ml-[12px] mt-[5px] flex items-center">
          <div className="flex h-[29px] w-[469px] items-center border border-[#777790] bg-[#ccccff]">
            <Ic c="ml-[9px] h-[20px] w-[27px]" vb="0 0 27 20"><ellipse cx="11" cy="8" rx="9" ry="6.500" fill="#999" stroke="#777" strokeWidth="2.500" /><path d="M18 13l8 6" stroke="#888" strokeWidth="3" /></Ic>
            <div className="ml-[8px] flex h-[26px] w-[415px] items-center border-2 border-b-white border-l-[#222266] border-r-white border-t-[#333399] pl-[6px] pt-[2px]"><Txt c="w-[222px] text-[#bcbcd0]">Filter (restricted)</Txt></div>
          </div>
          <Caret c="ml-[10px] h-[10px] w-[15px] text-black" />
        </div>
        <div className="mt-[14px] flex h-[33px] items-center pl-[3px]"><Check /><Txt c="ml-[12px] w-[76px] text-[#999]">Types</Txt><div className="ml-[6px] h-px w-[409px] bg-[#ccc]" /></div>
        <div className="-ml-px"><TrackRow on={false} w="w-[169px]" t="Accession (1)" fill="#047a04" k="text-[#999]" /><TrackRow on w="w-[130px]" t="Source (1)" fill="#0000ee" k="text-[#0000b0]" /></div>
        <div className="ml-[3px] mt-[4px] h-px w-[524px] bg-[#bbb]" />
        <div className="mt-[4px] flex h-[50px] w-[531px] shrink-0 border-b-2 border-[#222]">
          <div className="flex w-[288px] items-center border-r-2 border-[#222] pl-[19px] pt-[3px]"><ColIcon c="h-[15px] w-[27px]" /><Txt c="ml-[9px] w-[113px]">Columns</Txt></div>
          <div className="flex w-[69px] items-center border-r-2 border-[#222] pl-[17px] pt-[4px]"><Txt c="w-[32px] font-bold text-black">{">>"}</Txt></div>
          <div className="flex grow items-center border-r-2 border-[#222] pl-[20px] pt-[3px]"><Ic c="h-[18px] w-[26px]" vb="0 0 26 18"><path d="M9 6V1h16v16H9v-5" stroke="#5a8cf0" strokeWidth="2" /><path d="M18 9H6" stroke="#0000b8" strokeWidth="2.500" /><path d="M0 9l8-5v10z" fill="#0000b8" /></Ic><Txt c="ml-[8px] w-[101px]">Pop out</Txt></div>
        </div>
        <div className="mb-[2px] flex w-[531px] grow items-center border-b border-r border-[#888] pl-[67px] pt-[3px]"><Txt c="w-[394px] text-[#888]">Annotations Table (restricted)</Txt></div>
      </div>
    </div>
  );
}

const SideTab = ({ children, on }) => (
  <div className={"flex h-[40.700px] items-center rounded-r-md border border-l-0 border-[#888] " + (on ? "-ml-px w-[58px] bg-white pl-[15px]" : "w-[52px] bg-[#e8e8e8] pl-[10px]")}>{children}</div>
);
const Gear = ({ c, k, s, f = "#fff" }) => (
  <Ic c={c} vb="0 0 30 24"><ellipse cx="15" cy="12" rx="12.500" ry="10" stroke={s} strokeWidth="3.500" strokeDasharray="3.200 2.800" /><ellipse cx="15" cy="12" rx="11" ry="8.500" fill={k} stroke={s} /><ellipse cx="15" cy="12" rx="4.500" ry="3.500" fill={f} stroke={s} /></Ic>
);

function SideTabs() {
  return (
    <div className="flex w-[69px] shrink-0 flex-col border-l border-[#aaa] bg-[#ccc] pt-[138px]">
      <SideTab><Ic c="h-[22px] w-[30px]" vb="0 0 30 22"><path d="M21 2h4v6h-4z" fill="#c8b060" stroke="#8a7430" /><path d="M5 10 15 3l10 7v11H5z" fill="#eadfae" stroke="#998440" /><path d="M1 12 15 2l14 10" stroke="#b89a40" strokeWidth="3" /><path d="M12 12h6v9h-6z" fill="#a8862c" /></Ic></SideTab>
      <SideTab><Ic c="h-[21px] w-[30px]" vb="0 0 30 21"><rect x="1" y="1" width="28" height="16" fill="#d8d8d8" stroke="#999" /><rect x="4" y="3" width="22" height="11" fill="#5a9cf8" /><path d="M11 17h8l3 3H8z" fill="#aaa" /></Ic></SideTab>
      <SideTab><Ic c="h-[23px] w-[30px]" vb="0 0 30 23"><path d="M2 14h5.500v8H2zM12 8h5.500v14H12zM22 1h6v21h-6z" fill="#a4c0f4" stroke="#3c68b0" strokeWidth="1.500" /></Ic></SideTab>
      <SideTab on><Ic c="h-[18px] w-[30px]" vb="0 0 30 18"><path d="M1 4h17V1l11 8-11 8v-3H1z" fill="#f4e010" stroke="#a89400" /></Ic></SideTab>
      <SideTab><Ic c="h-[19px] w-[30px]" vb="0 0 30 19"><path d="M1 4h4V1h8v3h5V1l11 8.500L18 18v-3H1z" fill="url(#gOr)" stroke="#a85000" /><path d="M6 8c0-3 7-3 6 0-1 2-3 1-3 4M9 13v2" stroke="#fff" strokeWidth="1.800" /></Ic></SideTab>
      <SideTab><Ic c="h-[23px] w-[30px]" vb="0 0 30 23"><path d="M14 20C6 20 3 16 3 11.500S7 3 15 3c4 0 7 1 9 3" stroke="#0c4cd8" strokeWidth="5" /><path d="M29 1v10H17z" fill="#0c4cd8" /><path d="M26 14c-1 3-4 6-9 6" stroke="#7cd0f8" strokeWidth="5" /></Ic></SideTab>
      <SideTab><Gear c="h-[24px] w-[30px]" k="#c4d4ea" s="#8094b0" /></SideTab>
      <SideTab><Ic c="h-[19px] w-[28px]" vb="0 0 28 19"><ellipse cx="6.500" cy="5" rx="5" ry="4" stroke="#555" strokeWidth="2.200" /><ellipse cx="21" cy="14" rx="5" ry="4" stroke="#555" strokeWidth="2.200" /><path d="M22 1 6 18" stroke="#555" strokeWidth="2" /></Ic></SideTab>
      <div className="relative ml-[19px] mt-[22px] w-[28px]"><Gear c="h-[21px] w-[26px]" k="#666" s="#666" f="#ccc" /><Caret c="absolute -right-[2px] bottom-0 h-[5px] w-[10px] text-black" /></div>
      <Ic c="ml-[20px] mt-[24px] h-[20px] w-[22px]" vb="0 0 22 20"><path d="M0 10h18M9 3l9 7-9 7M20.500 0v20" stroke="#555" strokeWidth="2.500" /></Ic>
    </div>
  );
}

export default function App() {
  return (
    <div className="relative flex h-[1711px] w-[2468px] flex-col overflow-hidden bg-white font-['Noto_Sans','Open_Sans',sans-serif] text-[20.500px] text-[#2a2a2a]">
      <Defs />
      <div className="h-[5px] shrink-0 bg-black" />
      <div className="flex h-[39px] shrink-0 items-center border-b-2 border-l border-[#333] pl-[16px] pt-[3px]">
        <Txt u c="w-[43px]">File</Txt><Txt u c="ml-[23px] w-[49px]">Edit</Txt><Txt u c="ml-[21px] w-[65px]">View</Txt><Txt u c="ml-[21px] w-[71px]">Tools</Txt>
        <Txt u c="ml-[22px] w-[132px]">Sequence</Txt><Txt u c="ml-[22px] w-[248px]">{"Annotate & Predict"}</Txt><Txt u c="ml-[21px] w-[61px]">Help</Txt>
      </div>
      <Toolbar />
      <div className="flex h-[1577px] shrink-0">
        <Sidebar />
        <div className="flex w-[1949px] shrink-0 flex-col">
          <Documents />
          <div className="flex h-[46px] shrink-0 pl-[486px] pt-[5px]">
            <Txt c="mt-[10px] w-[524px]">Selected sequences are only summaries</Txt>
            <div className="ml-[32px] flex h-[39px] w-[381px] items-center border-b-2 border-r-2 border-[#222] pl-[9px] pt-[3px]"><Txt c="w-[361px]">Download Full Sequence(s)</Txt></div>
          </div>
          <div className="flex h-[47px] shrink-0 pl-[14px]">
            <div className="flex h-[45px] w-[214px] items-center border-r-2 border-[#222] pt-[5px]"><Txt c="w-[202px]">Sequence View</Txt></div>
            {tabs.map(([w, tw, t]) => (
              <div key={t} className={"flex h-[44px] items-center justify-center border-r-2 border-t border-r-[#222] border-t-[#8c8c6c] bg-[#b7b78f] pr-[2px] pt-[8px] " + w}><Txt c={tw}>{t}</Txt></div>
            ))}
          </div>
          <div className="flex w-[1948px] flex-col border-r-2 border-[#444] pl-[3px]">
            <SeqTools />
            <div className="flex h-[564px]">
              <Viewer /><Inspector /><SideTabs />
            </div>
          </div>
          <div className="flex grow items-center pl-[5px] pt-[4px]"><Txt c="w-[1338px]">Ctrl left click on a sequence position or annotation, or select a region to zoom in. Ctrl-shift left click to zoom out.</Txt></div>
        </div>
        <div className="ml-[7px] flex grow flex-col border-l-3 border-[#222] pl-[3px]">
          <div className="h-[38px] bg-linear-to-b from-[#b0c4de] to-[#d0dcea]" />
          <div className="ml-[5px] mt-[102px] grow border-l-2 border-[#555]">
            <Ic c="-ml-[17px] mt-[630px] h-[46px] w-[6px]" vb="0 0 6 46"><path d="M5 1v44" stroke="#000" strokeWidth="4" strokeDasharray="3 4" /></Ic>
          </div>
        </div>
      </div>
    </div>
  );
}
